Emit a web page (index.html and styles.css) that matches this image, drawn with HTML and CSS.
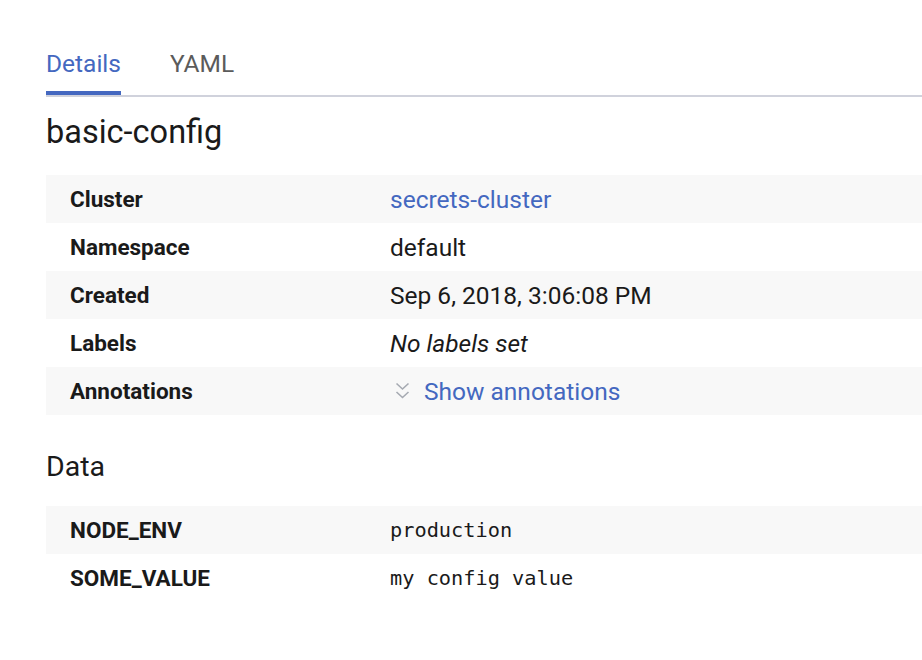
FILE: index.html
```html
<!DOCTYPE html>
<html>
<head>
<meta charset="utf-8">
<link rel="stylesheet" href="styles.css">
</head>
<body>
<div class="page">
  <nav class="tabs">
    <a class="tab active">Details</a>
    <a class="tab">YAML</a>
  </nav>
  <h1 class="title">basic-config</h1>
  <div class="kv">
    <div class="row"><div class="key">Cluster</div><div class="val link">secrets-cluster</div></div>
    <div class="row"><div class="key">Namespace</div><div class="val">default</div></div>
    <div class="row"><div class="key">Created</div><div class="val">Sep 6, 2018, 3:06:08 PM</div></div>
    <div class="row"><div class="key">Labels</div><div class="val italic">No labels set</div></div>
    <div class="row"><div class="key">Annotations</div><div class="val link toggle"><svg class="chev" width="15" height="18" viewBox="0 0 15 18"><path d="M1.5 1.5 L7.5 7 L13.5 1.5" fill="none" stroke="#a6aab2" stroke-width="1.6"/><path d="M1.5 10 L7.5 15.5 L13.5 10" fill="none" stroke="#a6aab2" stroke-width="1.6"/></svg><span>Show annotations</span></div></div>
  </div>
  <h2 class="section">Data</h2>
  <div class="kv">
    <div class="row"><div class="key">NODE_ENV</div><div class="val mono">production</div></div>
    <div class="row"><div class="key">SOME_VALUE</div><div class="val mono">my config value</div></div>
  </div>
</div>
</body>
</html>
```
FILE: styles.css
```css
html, body {
  margin: 0;
  padding: 0;
  background: #ffffff;
}
body {
  font-family: Roboto, "Noto Sans", sans-serif;
  color: #1f1f1f;
}
.page {
  padding: 46px 0 0 46px;
}
.tabs {
  display: flex;
  gap: 49px;
  border-bottom: 2px solid #d0d2dc;
}
.tab {
  display: block;
  font-size: 24.5px;
  line-height: 32px;
  padding: 2px 0 11px;
  color: #5b5b5b;
  border-bottom: 4px solid transparent;
}
.tab.active {
  color: #4468c0;
  border-bottom-color: #4468c0;
}
.title {
  margin: 17px 0 25px;
  font-size: 32.5px;
  line-height: 36px;
  font-weight: 400;
  color: #1a1a1a;
}
.kv {
  display: flex;
  flex-direction: column;
}
.row {
  display: grid;
  grid-template-columns: 344px 1fr;
  height: 48px;
  align-items: center;
}
.row:nth-child(odd) {
  background: #f8f8f8;
}
.key {
  padding-left: 24px;
  font-size: 22.5px;
  font-weight: 700;
  color: #1a1a1a;
}
.val {
  font-size: 24.5px;
  color: #1a1a1a;
}
.link {
  color: #4468c0;
}
.italic {
  font-style: italic;
}
.toggle {
  display: flex;
  align-items: center;
  gap: 14px;
  padding-left: 5px;
}
.chev {
  display: block;
}
.mono {
  font-family: "DejaVu Sans Mono", monospace;
  font-size: 20.3px;
  color: #1a1a1a;
}
.section {
  margin: 36px 0 23px;
  font-size: 28.5px;
  line-height: 32px;
  font-weight: 400;
  color: #1a1a1a;
}
```
